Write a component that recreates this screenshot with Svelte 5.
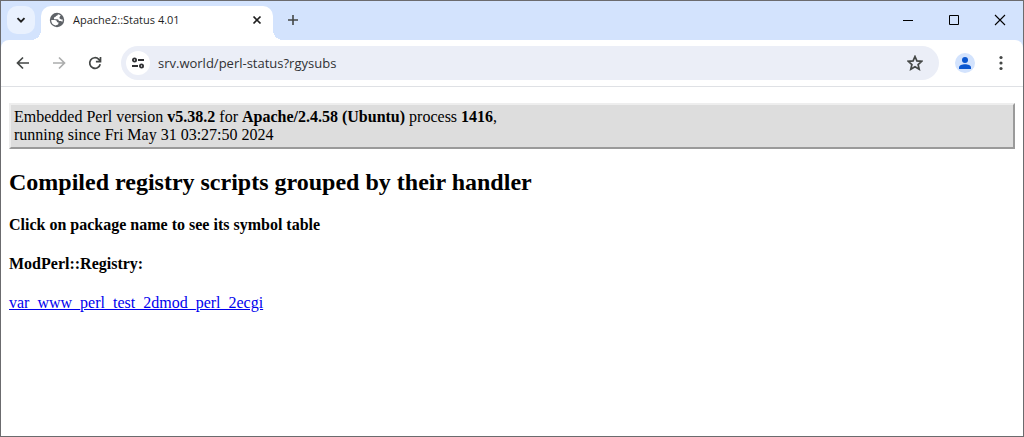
<script>
  let address = $state('srv.world/perl-status?rgysubs');
</script>

<div class="window">
  <header class="strip">
    <button class="search" aria-label="Search tabs">
      <svg width="10" height="10" viewBox="0 0 10 10"><path d="M1.5 3.2 5 6.7 8.5 3.2" fill="none" stroke="#1f1f1f" stroke-width="1.9" /></svg>
    </button>
    <div class="tab">
      <svg width="16" height="16" viewBox="0 0 16 16">
        <circle cx="8" cy="8" r="7.2" fill="#5f6368" />
        <path d="M8.900 2.200C8.900 3.400 8 3.800 7 3.900 6.600 5 5.800 5.200 5 5.400V7.200H8.200C9.400 7.200 9.800 8 9.800 9H11.600C12.300 9 12.800 9.300 13.200 9.900A5.800 5.800 0 0 0 13.700 7.200C12.600 7.600 11.200 7.400 10.700 6.600 10.200 5.600 10.700 4.600 11.800 3.600A5.700 5.700 0 0 0 8.900 2.200ZM2.200 8H5.700C7.200 8 8 8.800 8 10.200H9.400V11.500C9.400 12.600 8.300 12.800 6.600 13.600A5.800 5.800 0 0 1 2.200 8Z" fill="#fff" />
      </svg>
      <span class="title">Apache2::Status 4.01</span>
      <button class="plain close" aria-label="Close tab">
        <svg width="10" height="10" viewBox="0 0 10 10"><path d="m1.500 1.500 7 7m0-7-7 7" stroke="#1f1f1f" stroke-width="1.700" /></svg>
      </button>
    </div>
    <button class="plain add" aria-label="New tab">
      <svg width="12" height="12" viewBox="0 0 12 12"><path d="M6 1v10M1 6h10" stroke="#444746" stroke-width="1.600" /></svg>
    </button>
    <div class="controls">
      <button class="plain" aria-label="Minimize"><svg width="12" height="12" viewBox="0 0 12 12"><path d="M1 6.500h10" stroke="#000" /></svg></button>
      <button class="plain" aria-label="Maximize"><svg width="12" height="12" viewBox="0 0 12 12"><path d="M1.500 1.500h9v9h-9Z" fill="none" stroke="#000" /></svg></button>
      <button class="plain" aria-label="Close window"><svg width="12" height="12" viewBox="0 0 12 12"><path d="m1 1 10 10M11 1 1 11" stroke="#000" stroke-width="1.100" /></svg></button>
    </div>
  </header>

  <div class="shelf">
    <nav class="toolbar">
      <button class="plain nav" aria-label="Back">
        <svg width="16" height="16" viewBox="0 0 16 16"><path d="M14 8H3M8 2.500 2.500 8 8 13.500" fill="none" stroke="#444746" stroke-width="1.700" /></svg>
      </button>
      <button class="plain nav" aria-label="Forward" disabled>
        <svg width="16" height="16" viewBox="0 0 16 16"><path d="M2 8h11M8 2.500 13.500 8 8 13.500" fill="none" stroke="#acadad" stroke-width="1.700" /></svg>
      </button>
      <button class="plain nav" aria-label="Reload">
        <svg width="16" height="16" viewBox="0 0 16 16"><path d="M13.200 9.200A5.300 5.300 0 1 1 11.800 4.300L13.300 5.900M13.500 2v4.700H8.900" fill="none" stroke="#444746" stroke-width="1.700" /></svg>
      </button>
      <div class="omnibox">
        <button class="site" aria-label="View site information">
          <svg width="14" height="12" viewBox="0 0 14 12"><g fill="none" stroke="#303134" stroke-width="1.800"><circle cx="3.500" cy="3" r="1.600" /><path d="M7 3h6M1 9h6" /><circle cx="10.500" cy="9" r="1.600" /></g></svg>
        </button>
        <input aria-label="Address" spellcheck="false" bind:value={address} />
        <button class="plain star" aria-label="Bookmark this page">
          <svg width="16" height="16" viewBox="0 0 16 16"><path d="m8 1.500 1.900 4.400 4.800.4-3.600 3.200 1.100 4.700L8 11.700l-4.200 2.500 1.100-4.700L1.300 6.300l4.800-.4Z" fill="none" stroke="#444746" stroke-width="1.700" /></svg>
        </button>
      </div>
      <button class="profile" aria-label="Profile">
        <svg width="12" height="12" viewBox="0 0 12 12" fill="#0b57d0"><circle cx="6" cy="3" r="3" /><path d="M0 12v-1.700C0 8.300 3.200 7.200 6 7.200s6 1.100 6 3.100V12Z" /></svg>
      </button>
      <button class="plain more" aria-label="Menu">
        <svg width="4" height="16" viewBox="0 0 4 16" fill="#444746"><circle cx="2" cy="2.500" r="1.600" /><circle cx="2" cy="8" r="1.600" /><circle cx="2" cy="13.500" r="1.600" /></svg>
      </button>
    </nav>
  </div>

  <main>
    <p class="status">
      Embedded Perl version <b>v5.38.2</b> for <b>Apache/2.4.58 (Ubuntu)</b> process <b>1416</b>,<br />
      running since Fri May 31 03:27:50 2024
    </p>
    <h2>Compiled registry scripts grouped by their handler</h2>
    <h3>Click on package name to see its symbol table</h3>
    <h3>ModPerl::Registry:</h3>
    <a href="#var_www_perl_test_2dmod_perl_2ecgi">var_www_perl_test_2dmod_perl_2ecgi</a>
  </main>
</div>

<style>
  :global(body) { margin: 0; }
  .window {
    box-sizing: border-box;
    min-height: 100vh;
    border: 1px solid #6b6b6e;
    background: #fff;
    font-family: "Open Sans", "Noto Sans", sans-serif;
  }
  button { display: flex; align-items: center; justify-content: center; padding: 0; border: 0; }
  svg { display: block; flex: none; }
  .plain { background: none; }
  .strip {
    display: flex;
    align-items: flex-start;
    height: 39px;
    padding-left: 6px;
    background: #d3e3fd;
  }
  .search { width: 28px; height: 28px; margin-top: 5px; border-radius: 10px; background: #e9f1fe; }
  .tab {
    position: relative;
    box-sizing: border-box;
    display: flex;
    align-items: center;
    width: 232px;
    height: 34px;
    margin: 5px 0 0 6px;
    padding: 0 10px 6px 8px;
    border-radius: 10px 10px 0 0;
    background: #fff;
  }
  .tab::before, .tab::after {
    content: "";
    position: absolute;
    bottom: 0;
    width: 10px;
    height: 10px;
  }
  .tab::before { right: 100%; background: radial-gradient(circle at 0 0, transparent 10px, #fff 10px); }
  .tab::after { left: 100%; background: radial-gradient(circle at 100% 0, transparent 10px, #fff 10px); }
  .title { flex: 1; margin-left: 8px; font-size: 11px; line-height: 16px; color: #1f1f1f; white-space: nowrap; }
  .close { width: 12px; height: 16px; }
  .add { width: 28px; height: 28px; margin: 5px 0 0 6px; }
  .controls { display: flex; margin-left: auto; }
  .controls button { width: 46px; height: 38px; }
  .shelf { background: #d3e3fd; }
  .toolbar {
    display: flex;
    align-items: center;
    height: 46px;
    padding: 0 8px 0 4px;
    border-radius: 8px 8px 0 0;
    background: #fff;
  }
  .nav { width: 36px; height: 36px; }
  .omnibox {
    display: flex;
    align-items: center;
    flex: 1;
    min-width: 0;
    height: 34px;
    margin-left: 8px;
    padding: 0 16px 0 5px;
    border-radius: 17px;
    background: #ebeef7;
  }
  .site { width: 24px; height: 24px; border-radius: 50%; background: #fff; }
  input {
    flex: 1;
    min-width: 0;
    margin-left: 8px;
    padding: 0;
    border: 0;
    outline: 0;
    background: none;
    color: #303134;
    font: 13px/20px "Open Sans", "Noto Sans", sans-serif;
  }
  .profile { width: 20px; height: 20px; margin-left: 16px; border-radius: 50%; background: #d3e3fd; }
  .more { width: 28px; height: 28px; margin-left: 12px; }
  main {
    padding: 16px 8px;
    border-top: 1px solid #dfe1e5;
    color: #000;
    font: 16px/18px "Liberation Serif", "Times New Roman", serif;
  }
  .status { margin: 0; padding: 3px; border: 2px solid; border-color: #eee #9a9a9a #9a9a9a #eee; background: #ddd; }
  h2 { margin: 20px 0; font-size: 24px; line-height: 27px; }
  h3 { margin: 0 0 21px; font-size: 16px; line-height: 18px; }
  a { color: #00e; }
</style>
